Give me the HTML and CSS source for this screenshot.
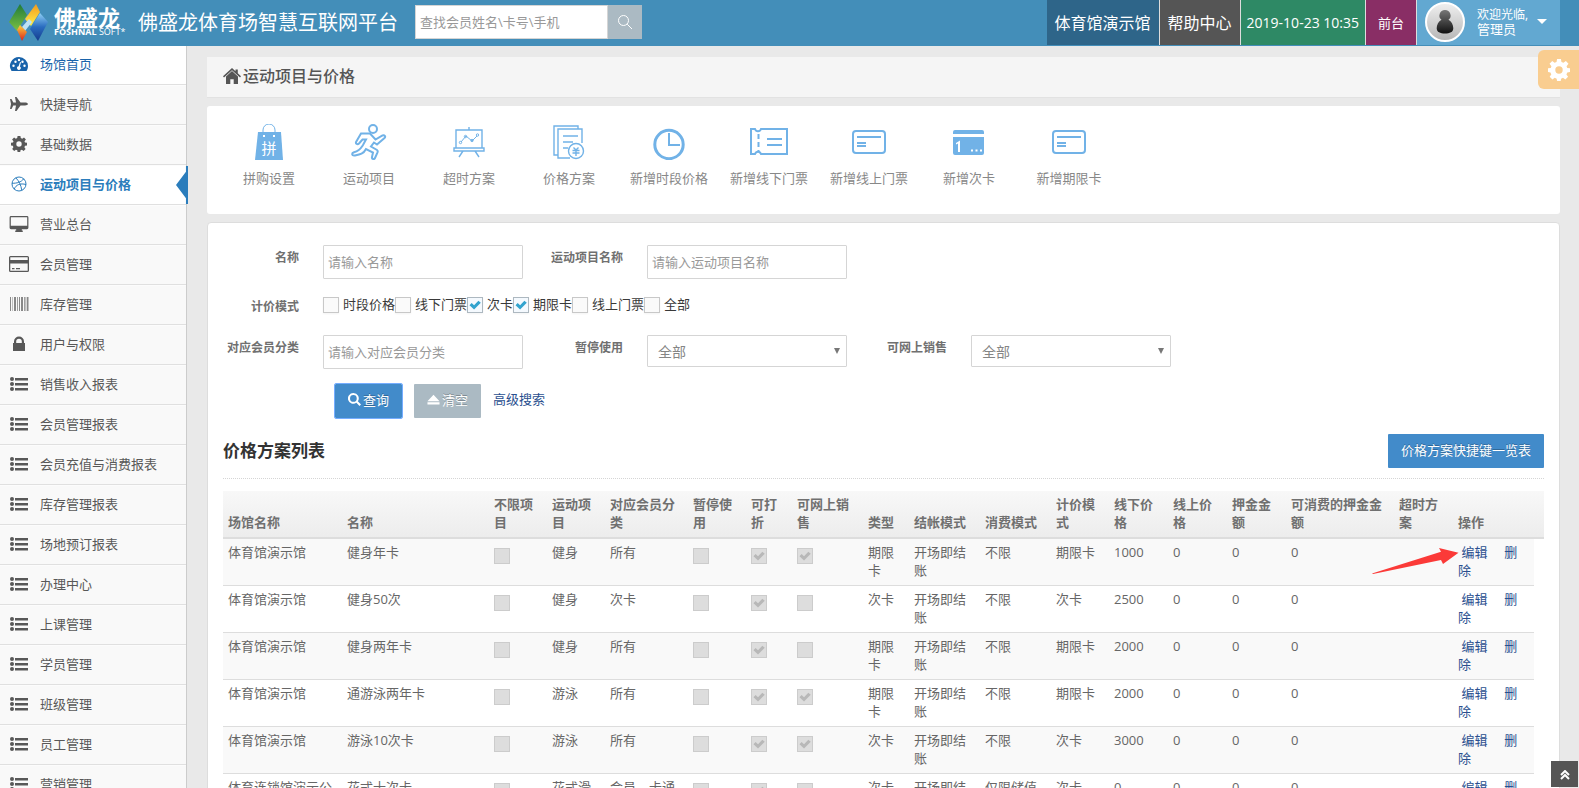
FILE: index.html
```html
<!DOCTYPE html>
<html lang="zh-CN">
  <head>
    <meta charset="UTF-8" />
    <meta name="viewport" content="width=device-width, initial-scale=1.0" />
    <title>运动项目与价格</title>
    <link rel="stylesheet" href="styles.css">
  </head>
  <body>
    <svg class="sprite" aria-hidden="true">
      <symbol id="icon-list" viewBox="0 0 20 16">
        <circle cx="3" cy="3" r="2" /><circle cx="3" cy="8" r="2" /><circle cx="3" cy="13" r="2" />
        <path d="M6 2h13v2.500H6zM6 7h13v2.500H6zM6 12h13v2.500H6z" />
      </symbol>
      <symbol id="icon-gear" viewBox="0 0 16 16">
        <path fill-rule="evenodd" d="M6.600 0h2.800l.4 2.100 1.400.6L13 1.500 14.900 3.500 13.500 5.200l.5 1.300 2 .300v2.700l-2 .300-.600 1.400 1.200 1.700-2 2-1.700-1.200-1.400.600-.300 1.900H6.600l-.3-1.900-1.400-.6-1.700 1.200-2-2 1.200-1.700-.6-1.400L0 9.500V6.800l2-.3.5-1.300L1.100 3.500l2-2 1.700 1.200 1.400-.6zM8 5.300a2.700 2.700 0 1 0 0 5.400 2.700 2.700 0 0 0 0-5.400z" />
      </symbol>
      <symbol id="icon-card" viewBox="0 0 34 24">
        <rect x="1" y="1" width="32" height="22" rx="3" fill="none" stroke="currentColor" stroke-width="2" />
        <path d="M5 6h24v2H5zM5 12h9v2H5zM5 15h9v2H5z" />
      </symbol>
    </svg>

    <header class="navbar">
      <a class="brand" href="#">
        <svg class="brand-mark" viewBox="0 0 40 38" aria-hidden="true">
          <defs>
            <linearGradient id="g-green" x2="0" y2="1"><stop stop-color="#1f7a3a" /><stop offset="1" stop-color="#7cc142" /></linearGradient>
            <linearGradient id="g-yellow" x2="0" y2="1"><stop stop-color="#f39a1d" /><stop offset="1" stop-color="#fff04a" /></linearGradient>
            <linearGradient id="g-blue" x2="0" y2="1"><stop stop-color="#8fd0f5" /><stop offset=".5" stop-color="#2a6cc0" /><stop offset="1" stop-color="#143a8c" /></linearGradient>
            <linearGradient id="g-red" x2="0" y2="1"><stop stop-color="#ffd23c" /><stop offset="1" stop-color="#d8201e" /></linearGradient>
          </defs>
          <path fill="url(#g-green)" d="M11 0l7 11L8 27 0 18z" />
          <path fill="url(#g-yellow)" d="M27 0l4 8-9 14-6-7z" />
          <path fill="url(#g-blue)" d="M31 9l8 9-10 19-8-12z" />
          <path fill="#bfe3f5" d="M20 15l3 3-7 9-3-4z" />
          <path fill="url(#g-red)" d="M8 26l3-5 7 7-5 9z" />
        </svg>
        <span class="brand-text">
          <span class="brand-cn">佛盛龙</span>
          <span class="brand-en"><b>FOSHNAL</b> SOFT*</span>
        </span>
      </a>
      <h1 class="site-title">佛盛龙体育场智慧互联网平台</h1>
      <form class="nav-search">
        <input type="text" placeholder="查找会员姓名\卡号\手机" aria-label="查找会员" />
        <button type="button" aria-label="搜索">
          <svg viewBox="0 0 16 16"><circle cx="6.500" cy="6.500" r="5" /><path d="M10.200 10.200L15 15" /></svg>
        </button>
      </form>
      <ul class="ace-nav">
        <li class="nav-venue"><a href="#">体育馆演示馆</a></li>
        <li class="nav-help"><a href="#">帮助中心</a></li>
        <li class="nav-date"><a href="#">2019-10-23 10:35</a></li>
        <li class="nav-desk"><a href="#">前台</a></li>
        <li class="nav-user">
          <a href="#">
            <svg class="avatar" viewBox="0 0 40 40" aria-hidden="true">
              <defs>
                <linearGradient id="g-bg" x2="0" y2="1"><stop stop-color="#f0f0f0" /><stop offset="1" stop-color="#b5b5b5" /></linearGradient>
                <linearGradient id="g-man" x2="0" y2="1"><stop stop-color="#777" /><stop offset="1" stop-color="#111" /></linearGradient>
              </defs>
              <circle cx="20" cy="20" r="19" fill="url(#g-bg)" stroke="#fff" stroke-width="2" />
              <path fill="url(#g-man)" d="M20 8a5.500 5.500 0 0 1 3.500 9.800c3 1.500 4.800 5 4.800 8.500 0 4-3.500 5.200-8.300 5.200s-8.300-1.200-8.300-5.200c0-3.500 1.800-7 4.800-8.500A5.500 5.500 0 0 1 20 8z" />
            </svg>
            <span class="user-info"><small>欢迎光临,</small>管理员</span>
            <i class="caret"></i>
          </a>
        </li>
      </ul>
    </header>

    <div class="main-container">
      <nav class="sidebar">
        <ul>
          <li class="home"><a href="#"><svg viewBox="0 0 18 16"><path fill-rule="evenodd" d="M9 1a9 9 0 0 1 9 9c0 2-.6 3.600-1.500 5h-15A9 9 0 0 1 9 1zM3.500 8.500a1.200 1.200 0 1 0 0 2.400 1.200 1.200 0 0 0 0-2.400zm2-4a1.200 1.200 0 1 0 0 2.400 1.200 1.200 0 0 0 0-2.400zM9 2.800a1.200 1.200 0 1 0 0 2.400 1.200 1.200 0 0 0 0-2.400zm5.500 5.700a1.200 1.200 0 1 0 0 2.400 1.200 1.200 0 0 0 0-2.400zm-2-4a1.200 1.200 0 1 0 0 2.400 1.200 1.200 0 0 0 0-2.400zM10 6l-1.400 4.300a1.800 1.800 0 1 0 1.300.3L11 6.300z" /></svg>场馆首页</a></li>
          <li><a href="#"><svg viewBox="0 0 18 16"><path d="M0 3h1.500L3.300 6.600H6L5 1h1.500l4 5.600h4.500c1.500 0 3 .700 3 1.400s-1.500 1.400-3 1.400h-4.500L6.500 15H5l1-5.600H3.300L1.500 13H0l1-5z" /></svg>快捷导航</a></li>
          <li><a href="#"><svg viewBox="0 0 16 16"><use href="#icon-gear" /></svg>基础数据</a></li>
          <li class="active"><a href="#"><svg class="line" viewBox="0 0 16 16"><circle cx="8" cy="8" r="7" /><path d="M4.800 1.800C8 5 10 9 10.800 14.400M1 7.300c5 0 9-1 11.800-4.500M3.200 13.200C5 8.500 9.500 7 15 8.500" /></svg>运动项目与价格</a></li>
          <li><a href="#"><svg viewBox="0 0 20 17"><path fill-rule="evenodd" d="M1.500 0h17A1.500 1.500 0 0 1 20 1.500v11a1.500 1.500 0 0 1-1.500 1.500H13v1.500h1V17H6v-1.500h1V14H1.500A1.500 1.500 0 0 1 0 12.500v-11A1.500 1.500 0 0 1 1.500 0zM1.300 1.300v9h17.400v-9z" /></svg>营业总台</a></li>
          <li><a href="#"><svg viewBox="0 0 20 16"><path fill-rule="evenodd" d="M1.500 0h17A1.500 1.500 0 0 1 20 1.500v13a1.500 1.500 0 0 1-1.500 1.500h-17A1.500 1.500 0 0 1 0 14.500v-13A1.500 1.500 0 0 1 1.500 0zM1.300 1.300V4h17.400V1.300zM1.300 7.500v7.200h17.400V7.500zM3 12h2.500v1.300H3zm4 0h4v1.300H7z" /></svg>会员管理</a></li>
          <li><a href="#"><svg viewBox="0 0 20 16"><path opacity=".7" d="M1 1h1v14H1zM3 1h.500v14H3zM5 1h2v14H5zM8 1h.800v14H8zM10 1h1v14h-1zM12 1h2v14h-2zM15 1h.800v14H15zM16.500 1h.800v14h-.800zM18 1h1.500v14H18z" /></svg>库存管理</a></li>
          <li><a href="#"><svg viewBox="0 0 16 16"><path fill-rule="evenodd" d="M3 7V5.500a5 5 0 0 1 10 0V7h1v8H2V7zM5.200 7h5.600V5.500a2.800 2.800 0 0 0-5.600 0z" /></svg>用户与权限</a></li>
          <li><a href="#"><svg><use href="#icon-list" /></svg>销售收入报表</a></li>
          <li><a href="#"><svg><use href="#icon-list" /></svg>会员管理报表</a></li>
          <li><a href="#"><svg><use href="#icon-list" /></svg>会员充值与消费报表</a></li>
          <li><a href="#"><svg><use href="#icon-list" /></svg>库存管理报表</a></li>
          <li><a href="#"><svg><use href="#icon-list" /></svg>场地预订报表</a></li>
          <li><a href="#"><svg><use href="#icon-list" /></svg>办理中心</a></li>
          <li><a href="#"><svg><use href="#icon-list" /></svg>上课管理</a></li>
          <li><a href="#"><svg><use href="#icon-list" /></svg>学员管理</a></li>
          <li><a href="#"><svg><use href="#icon-list" /></svg>班级管理</a></li>
          <li><a href="#"><svg><use href="#icon-list" /></svg>员工管理</a></li>
          <li><a href="#"><svg><use href="#icon-list" /></svg>营销管理</a></li>
        </ul>
      </nav>

      <main class="page-content">
        <div class="page-head">
          <svg viewBox="0 0 18 16" aria-hidden="true"><path d="M9 3l6 5.500V16h-4.300v-4.800H7.300V16H3V8.500zM9 0l3.500 3.200V1.500h2.300v3.800L18 8.200l-1 1.200L9 2.200 1 9.400 0 8.200z" /></svg>
          <h2>运动项目与价格</h2>
        </div>

        <!-- 快捷入口 -->
        <div class="shortcuts">
          <a href="#">
            <svg viewBox="0 0 36 36"><path d="M7 8h23l2 28H4z" /><path class="line thin" d="M12 11V6a6 6 0 0 1 12 0v5" /><path fill="#fff" d="M12 11h2v2h-2zM22 11h2v2h-2z" /><text x="18" y="30" text-anchor="middle" fill="#fff">拼</text></svg>
            拼购设置
          </a>
          <a href="#">
            <svg viewBox="0 0 36 36"><circle class="line" cx="22" cy="5" r="4" /><path class="line" d="M10 9.500L19 9.500l5.500 6 7-4c2-1 3.500 1 2 2.500L26 20.500l-3-2-3 4 6 3.500c1 .7.800 1.500.5 2.300L24 34c-.8 1.800-3.500 1.200-3-1l1-4.500-7-3.500c-2.500 5-6 5.500-11.500 6.500-3 .4-3-2.600-.5-3.300 6-1.700 7-4.200 9-7.200l3-5.500h-3.500l-3.500 4c-1.500 1.500-3.800.3-2.800-1.700z" /></svg>
            运动项目
          </a>
          <a href="#">
            <svg viewBox="0 0 36 36"><path class="line board" d="M5 6h26v18H5zM3 24h30v3H3zM18 3v3M12 27l-4 6M24 27l4 6" /><path class="line thin" d="M10 18l5-6 6 5 5-5" /><g class="line thin"><circle cx="9.500" cy="18.500" r="1.200" /><circle cx="14.500" cy="12.500" r="1.200" /><circle cx="21" cy="16.500" r="1.200" /><circle cx="26.500" cy="11" r="1.200" /></g></svg>
            超时方案
          </a>
          <a href="#">
            <svg viewBox="0 0 36 36"><path class="line board" d="M7 31H3V2h24v3M19 34H7V5h24v14M12 12h15M12 18h10M12 24h5" /><circle class="line board" cx="25" cy="27" r="7.500" /><path class="line board" d="M22.500 23.500l2.500 2.500 2.500-2.500M21.500 26.500h7M21.500 29h7M25 26v6" /></svg>
            价格方案
          </a>
          <a href="#">
            <svg viewBox="0 0 36 36"><circle class="line thick" cx="18" cy="20.500" r="14.200" /><path class="line" d="M18 9v12h11" /></svg>
            新增时段价格
          </a>
          <a href="#">
            <svg class="wide" viewBox="0 0 38 36"><path class="line" d="M1 5h4c1 3 5 3 6 0h26v25H11c-1-3-5-3-6 0H1z" /><path class="line" stroke-dasharray="5 3" d="M8.500 10v18" /><path class="line" d="M17 15h15M17 21h15" /></svg>
            新增线下门票
          </a>
          <a href="#">
            <svg class="wide" viewBox="-2 -6 38 36"><use href="#icon-card" width="34" height="24" /></svg>
            新增线上门票
          </a>
          <a href="#">
            <svg viewBox="0 0 36 36"><path d="M2 10V8a2 2 0 0 1 2-2h27a2 2 0 0 1 2 2v2zM2 13h31v16a2 2 0 0 1-2 2H4a2 2 0 0 1-2-2z" /><path fill="#fff" d="M5 19l4-2.500V28H7V19.500l-2 1zM20 25.500h2v2h-2zM24.500 25.500h2v2h-2zM29 25.500h2v2h-2z" /></svg>
            新增次卡
          </a>
          <a href="#">
            <svg class="wide" viewBox="-2 -6 38 36"><use href="#icon-card" width="34" height="24" /></svg>
            新增期限卡
          </a>
        </div>

        <section class="panel">
          <form class="query-form">
            <div class="form-row">
              <div class="field"><label for="name">名称</label><input type="text" id="name" placeholder="请输入名称" /></div>
              <div class="field"><label for="sport">运动项目名称</label><input type="text" id="sport" placeholder="请输入运动项目名称" /></div>
            </div>
            <div class="form-row checks">
              <span class="row-label">计价模式</span>
              <div class="check-list">
                <label><input type="checkbox" />时段价格</label>
                <label><input type="checkbox" />线下门票</label>
                <label><input type="checkbox" checked />次卡</label>
                <label><input type="checkbox" checked />期限卡</label>
                <label><input type="checkbox" />线上门票</label>
                <label><input type="checkbox" />全部</label>
              </div>
            </div>
            <div class="form-row">
              <div class="field"><label for="member">对应会员分类</label><input type="text" id="member" placeholder="请输入对应会员分类" /></div>
              <div class="field"><label for="paused">暂停使用</label><span class="select"><select id="paused"><option>全部</option></select></span></div>
              <div class="field"><label for="online">可网上销售</label><span class="select"><select id="online"><option>全部</option></select></span></div>
            </div>
            <div class="form-actions">
              <button type="button" class="btn btn-primary btn-focus"><svg viewBox="0 0 14 14"><path fill-rule="evenodd" d="M5.800 0a5.800 5.800 0 0 1 4.800 9L14 12.400 12.400 14 9 10.600A5.800 5.800 0 1 1 5.800 0zm0 2.200a3.600 3.600 0 1 0 0 7.200 3.600 3.600 0 0 0 0-7.200z" /></svg>查询</button>
              <button type="button" class="btn btn-muted"><svg viewBox="0 0 14 14"><path d="M7 2l6.500 7H.5zM.5 10h13v2.500H.5z" /></svg>清空</button>
              <a href="#">高级搜索</a>
            </div>
          </form>

          <div class="list-head">
            <h3>价格方案列表</h3>
            <button type="button" class="btn btn-primary">价格方案快捷键一览表</button>
          </div>

          <table class="price-table">
            <colgroup>
              <col class="w-venue" /><col /><col class="w-3" /><col class="w-3" /><col class="w-5" /><col class="w-3" />
              <col class="w-2" /><col class="w-4" /><col class="w-2" /><col class="w-4" /><col class="w-4" /><col class="w-3" />
              <col class="w-price" /><col class="w-price" /><col class="w-price" /><col class="w-deposit" /><col class="w-price" />
              <col class="w-action" /><col class="w-gutter" />
            </colgroup>
            <thead>
              <tr>
                <th>场馆名称</th><th>名称</th><th>不限项目</th><th>运动项目</th><th>对应会员分类</th><th>暂停使用</th>
                <th>可打折</th><th>可网上销售</th><th>类型</th><th>结帐模式</th><th>消费模式</th><th>计价模式</th>
                <th>线下价格</th><th>线上价格</th><th>押金金额</th><th>可消费的押金金额</th><th>超时方案</th><th colspan="2">操作</th>
              </tr>
            </thead>
            <tbody>
              <tr>
                <td>体育馆演示馆</td><td>健身年卡</td>
                <td><input type="checkbox" disabled aria-label="不限项目" /></td>
                <td>健身</td><td>所有</td>
                <td><input type="checkbox" disabled aria-label="暂停使用" /></td>
                <td><input type="checkbox" disabled checked aria-label="可打折" /></td>
                <td><input type="checkbox" disabled checked aria-label="可网上销售" /></td>
                <td>期限卡</td><td>开场即结账</td><td>不限</td><td>期限卡</td>
                <td>1000</td><td>0</td><td>0</td><td>0</td><td></td>
                <td class="action">&nbsp;<a href="#">编辑</a>&nbsp;&nbsp;&nbsp;&nbsp;&nbsp;<a href="#">删除</a>
                  <svg class="pointer" viewBox="0 0 87 28" aria-hidden="true"><path d="M0 26.500L69 4.700 67 1l19.500 4.700L71 17l-2-4L1 27z" /></svg>
                </td>
              </tr>
              <tr>
                <td>体育馆演示馆</td><td>健身50次</td>
                <td><input type="checkbox" disabled aria-label="不限项目" /></td>
                <td>健身</td><td>次卡</td>
                <td><input type="checkbox" disabled aria-label="暂停使用" /></td>
                <td><input type="checkbox" disabled checked aria-label="可打折" /></td>
                <td><input type="checkbox" disabled aria-label="可网上销售" /></td>
                <td>次卡</td><td>开场即结账</td><td>不限</td><td>次卡</td>
                <td>2500</td><td>0</td><td>0</td><td>0</td><td></td>
                <td class="action">&nbsp;<a href="#">编辑</a>&nbsp;&nbsp;&nbsp;&nbsp;&nbsp;<a href="#">删除</a></td>
              </tr>
              <tr>
                <td>体育馆演示馆</td><td>健身两年卡</td>
                <td><input type="checkbox" disabled aria-label="不限项目" /></td>
                <td>健身</td><td>所有</td>
                <td><input type="checkbox" disabled aria-label="暂停使用" /></td>
                <td><input type="checkbox" disabled checked aria-label="可打折" /></td>
                <td><input type="checkbox" disabled aria-label="可网上销售" /></td>
                <td>期限卡</td><td>开场即结账</td><td>不限</td><td>期限卡</td>
                <td>2000</td><td>0</td><td>0</td><td>0</td><td></td>
                <td class="action">&nbsp;<a href="#">编辑</a>&nbsp;&nbsp;&nbsp;&nbsp;&nbsp;<a href="#">删除</a></td>
              </tr>
              <tr>
                <td>体育馆演示馆</td><td>通游泳两年卡</td>
                <td><input type="checkbox" disabled aria-label="不限项目" /></td>
                <td>游泳</td><td>所有</td>
                <td><input type="checkbox" disabled aria-label="暂停使用" /></td>
                <td><input type="checkbox" disabled checked aria-label="可打折" /></td>
                <td><input type="checkbox" disabled checked aria-label="可网上销售" /></td>
                <td>期限卡</td><td>开场即结账</td><td>不限</td><td>期限卡</td>
                <td>2000</td><td>0</td><td>0</td><td>0</td><td></td>
                <td class="action">&nbsp;<a href="#">编辑</a>&nbsp;&nbsp;&nbsp;&nbsp;&nbsp;<a href="#">删除</a></td>
              </tr>
              <tr>
                <td>体育馆演示馆</td><td>游泳10次卡</td>
                <td><input type="checkbox" disabled aria-label="不限项目" /></td>
                <td>游泳</td><td>所有</td>
                <td><input type="checkbox" disabled aria-label="暂停使用" /></td>
                <td><input type="checkbox" disabled checked aria-label="可打折" /></td>
                <td><input type="checkbox" disabled checked aria-label="可网上销售" /></td>
                <td>次卡</td><td>开场即结账</td><td>不限</td><td>次卡</td>
                <td>3000</td><td>0</td><td>0</td><td>0</td><td></td>
                <td class="action">&nbsp;<a href="#">编辑</a>&nbsp;&nbsp;&nbsp;&nbsp;&nbsp;<a href="#">删除</a></td>
              </tr>
              <tr>
                <td>体育连锁馆演示公司</td><td>花式十次卡</td>
                <td><input type="checkbox" disabled aria-label="不限项目" /></td>
                <td>花式滑冰</td><td>会员、卡通</td>
                <td><input type="checkbox" disabled aria-label="暂停使用" /></td>
                <td><input type="checkbox" disabled checked aria-label="可打折" /></td>
                <td><input type="checkbox" disabled aria-label="可网上销售" /></td>
                <td>次卡</td><td>开场即结账</td><td>仅限储值卡</td><td>次卡</td>
                <td>0</td><td>0</td><td>0</td><td>0</td><td></td>
                <td class="action">&nbsp;<a href="#">编辑</a>&nbsp;&nbsp;&nbsp;&nbsp;&nbsp;<a href="#">删除</a></td>
              </tr>
            </tbody>
          </table>
        </section>
      </main>
    </div>

    <button type="button" class="settings-btn" aria-label="设置"><svg viewBox="0 0 16 16"><use href="#icon-gear" /></svg></button>
    <button type="button" class="scroll-up" aria-label="返回顶部"><svg viewBox="0 0 10 10"><path d="M1 5l4-4 4 4M1 9l4-4 4 4" /></svg></button>
  </body>
</html>
```

FILE: styles.css
```css
* {
  box-sizing: border-box;
}

body {
  margin: 0;
  height: 100vh;
  display: flex;
  flex-direction: column;
  overflow: hidden;
  background: #e9e9e9;
  color: #393939;
  font-family: "Open Sans", "Noto Sans CJK SC", sans-serif;
  font-size: 13px;
  line-height: 18px;
}

ul {
  list-style: none;
  margin: 0;
  padding: 0;
}

h1, h2, h3 {
  margin: 0;
}

a {
  color: #2a4f8f;
  text-decoration: none;
}

svg {
  fill: currentColor;
  flex: none;
}

input, select, button {
  font-family: inherit;
  font-size: 13px;
  margin: 0;
}

.sprite {
  position: absolute;
  width: 0;
  height: 0;
}

/* Navbar */
.navbar {
  display: flex;
  align-items: center;
  flex: none;
  height: 46px;
  padding: 0 19px 0 9px;
  background: #438eb9;
  color: #fff;
}

.brand {
  display: flex;
  align-items: center;
  gap: 5px;
  width: 129px;
  color: #fff;
}

.brand-mark {
  width: 40px;
  height: 38px;
}

.brand-text {
  display: flex;
  flex-direction: column;
  padding-bottom: 2px;
  white-space: nowrap;
}

.brand-cn {
  font-size: 22px;
  font-weight: 700;
  line-height: 20px;
}

.brand-en {
  font-size: 9px;
  line-height: 10px;
}

.site-title {
  font-size: 20px;
  font-weight: 400;
  line-height: 46px;
  white-space: nowrap;
}

.nav-search {
  display: flex;
  margin-left: 17px;
  margin-bottom: 2px;
}

.nav-search input {
  width: 193px;
  height: 34px;
  padding: 0 4px;
  border: 1px solid #d5d5d5;
  background: #fff;
}

::placeholder {
  color: #999;
  opacity: 1;
}

.nav-search button {
  width: 34px;
  height: 34px;
  padding: 0;
  border: 0;
  background: #abbac3;
  color: #fff;
}

.nav-search svg {
  width: 16px;
  height: 16px;
  display: block;
  margin: 0 auto;
  fill: none;
  stroke: currentColor;
  stroke-width: 1;
}

.ace-nav {
  display: flex;
  align-self: flex-start;
  height: 45px;
  margin-left: auto;
}

.ace-nav li + li {
  border-left: 1px solid #ddd;
}

.ace-nav a {
  display: flex;
  align-items: center;
  height: 100%;
  padding: 0 8px;
  color: #fff;
  white-space: nowrap;
}

.nav-venue {
  background: #2e6589;
  font-size: 16px;
}

.nav-help {
  background: #555;
  font-size: 16px;
}

.nav-date {
  background: #2e8965;
  font-size: 14px;
}

.ace-nav .nav-date a {
  padding: 0 6px;
}

.nav-desk {
  background: #892e65;
  font-size: 13px;
}

.ace-nav .nav-desk a {
  padding: 0 12px;
}

.nav-user {
  background: #62a8d1;
}

.ace-nav .nav-user a {
  padding: 0 13px 2px 8px;
}

.avatar {
  width: 40px;
  height: 40px;
}

.user-info {
  display: flex;
  flex-direction: column;
  width: 60px;
  margin-left: 12px;
  line-height: 15px;
}

.user-info small {
  font-size: 12px;
}

.caret {
  border: 5px solid transparent;
  border-top-color: #fff;
  border-bottom: 0;
}

.main-container {
  display: flex;
  flex: 1;
  min-height: 0;
}

/* Sidebar */
.sidebar {
  flex: none;
  width: 187px;
  background: #f2f2f2;
  border-right: 1px solid #ccc;
}

.sidebar li {
  position: relative;
  border-top: 1px solid #fcfcfc;
  border-bottom: 1px solid #e0e0e0;
  background: #f9f9f9;
}

.sidebar li:first-child {
  border-top: 0;
}

.sidebar a {
  display: flex;
  align-items: center;
  gap: 11px;
  height: 38px;
  padding: 0 0 2px 9px;
  color: #585858;
}

.sidebar svg {
  width: 20px;
  height: 16px;
}

.sidebar .home,
.sidebar .active {
  background: #fff;
}

.sidebar .home a {
  color: #1963aa;
}

.sidebar .active a {
  color: #2b7dbc;
  font-weight: 700;
}

.line {
  fill: none;
  stroke: currentColor;
  stroke-width: 2;
}

.sidebar .line,
.thin {
  stroke-width: 1;
}

.board {
  stroke-width: 1.4;
}

.thick {
  stroke-width: 3;
}

.sidebar .active::after {
  content: "";
  position: absolute;
  top: 0;
  right: -2px;
  bottom: 0;
  width: 12px;
  background: #2b7dbc;
  clip-path: polygon(83% 0, 100% 0, 100% 100%, 83% 100%, 83% 85%, 0 50%, 83% 15%);
}

/* Content */
.page-content {
  flex: 1;
  min-width: 0;
  padding: 11px 19px 0 20px;
}

.page-head {
  display: flex;
  align-items: center;
  gap: 2px;
  height: 41px;
  padding: 0 0 2px 16px;
  background: #f5f5f5;
  border-bottom: 1px solid #e2e2e2;
  color: #555;
}

.page-head svg {
  width: 18px;
  height: 16px;
}

.page-head h2 {
  font-size: 16px;
  font-weight: 500;
}

.shortcuts {
  display: flex;
  height: 108px;
  margin-top: 8px;
  padding: 18px 12px 0;
  border-radius: 3px;
  background: #fff;
}

.shortcuts a {
  display: flex;
  flex-direction: column;
  align-items: center;
  gap: 9px;
  width: 100px;
  color: #888;
  white-space: nowrap;
}

.shortcuts svg {
  width: 36px;
  height: 36px;
  color: #71b2e7;
}

.shortcuts svg.wide {
  width: 38px;
}

.shortcuts text {
  font-size: 15px;
}

.panel {
  margin-top: 8px;
  padding: 22px 15px 0;
  border: 1px solid #ddd;
  border-radius: 4px;
  background: #fff;
}

.form-row {
  display: flex;
  height: 52px;
}

.form-row.checks {
  height: 38px;
}

.checks + .form-row {
  height: 49px;
}

.field {
  display: flex;
  align-items: flex-start;
  width: 324px;
}

.field label,
.row-label {
  width: 100px;
  padding: 4px 24px 0 0;
  color: #707070;
  font-size: 12px;
  font-weight: 700;
  text-align: right;
}

.field input,
.field select {
  width: 200px;
  height: 34px;
  padding: 0 4px;
  border: 1px solid #d5d5d5;
  border-radius: 1px;
  background: #fff;
  color: #858585;
}

.row-label {
  padding-top: 1px;
}

.check-list {
  display: flex;
}

.check-list label {
  display: flex;
  align-items: flex-start;
  gap: 4px;
  line-height: 14px;
}

input[type="checkbox"] {
  appearance: none;
  position: relative;
  display: block;
  flex: none;
  width: 16px;
  height: 16px;
  border: 1px solid #c8c8c8;
  background: #fafafa;
}

.check-list input {
  box-shadow: 0 1px 2px rgba(0, 0, 0, 0.05);
}

input[type="checkbox"]:checked::after {
  content: "";
  position: absolute;
  inset: 1px;
  background: #32a3ce;
  clip-path: polygon(4% 52%, 22% 34%, 42% 52%, 78% 14%, 98% 32%, 42% 88%);
}

.check-list input:checked {
  border-color: #adb8c0;
  background: #f4f9fe;
}

.select {
  position: relative;
}

.field select {
  appearance: none;
  height: 32px;
  padding: 0 10px;
  font-size: 14px;
}

.select::after {
  content: "";
  position: absolute;
  top: 13px;
  right: 7px;
  border: 3px solid transparent;
  border-top: 6px solid #777;
  border-bottom: 0;
}

.form-actions {
  display: flex;
  align-items: center;
  padding-left: 112px;
}

.form-actions a {
  margin: 0 0 4px 12px;
}

.btn {
  display: flex;
  align-items: center;
  justify-content: center;
  gap: 2px;
  height: 34px;
  padding: 0 13px 3px;
  border: 0;
  border-radius: 1px;
  color: #fff;
  text-shadow: 0 -1px 0 rgba(0, 0, 0, 0.25);
}

.btn svg {
  width: 13px;
  height: 13px;
}

.btn-primary {
  background: #428bca;
}

.btn-focus {
  outline: 1px solid #75adff;
}

.btn-muted {
  margin-left: 12px;
  background: #abbac3;
}

.list-head {
  display: flex;
  align-items: center;
  justify-content: space-between;
  height: 61px;
  margin-bottom: 12px;
  padding-top: 6px;
  border-bottom: 1px dotted #d5d5d5;
}

.list-head h3 {
  color: #333;
  font-size: 17px;
  font-weight: 700;
}

/* Price table */
.price-table {
  width: 100%;
  table-layout: fixed;
  border-spacing: 0;
  color: #666;
}

.w-venue { width: 119px; }
.w-2 { width: 46px; }
.w-3 { width: 58px; }
.w-4 { width: 71px; }
.w-5 { width: 83px; }
.w-price { width: 59px; }
.w-deposit { width: 108px; }
.w-action { width: 81px; }
.w-gutter { width: 10px; }

.price-table thead tr {
  background: linear-gradient(#f8f8f8, #ececec);
}

.price-table th {
  padding: 4px 5px 6px;
  border-bottom: 2px solid #ddd;
  color: #707070;
  font-weight: 700;
  text-align: left;
  vertical-align: bottom;
}

.price-table td {
  padding: 4px 5px 6px;
  border-bottom: 1px solid #ddd;
  vertical-align: top;
}

.price-table tbody tr:nth-child(odd) td {
  background: #f9f9f9;
}

.price-table input[type="checkbox"] {
  margin-top: 5px;
  border-color: #ccc;
  background: #ddd;
}

.price-table input[type="checkbox"]:checked::after {
  background: #b8b8b8;
}

.action {
  position: relative;
}

/* Arrow pointing at the edit link */
.pointer {
  position: absolute;
  top: 8px;
  left: -81px;
  width: 87px;
  height: 28px;
  color: #fb3a38;
}

.settings-btn {
  position: fixed;
  top: 50px;
  right: 0;
  width: 41px;
  height: 39px;
  padding: 0 0 0 10px;
  border: 0;
  border-radius: 6px 0 0 6px;
  background: #f9cd90;
  color: #fff;
}

.settings-btn svg {
  display: block;
  width: 22px;
  height: 22px;
}

.scroll-up {
  position: fixed;
  right: 1px;
  bottom: 1px;
  width: 27px;
  height: 26px;
  padding: 0;
  border: 0;
  background: #555;
  color: #fff;
}

.scroll-up svg {
  display: block;
  width: 10px;
  height: 10px;
  margin: 2px auto 0;
  fill: none;
  stroke: currentColor;
  stroke-width: 2;
}
```
